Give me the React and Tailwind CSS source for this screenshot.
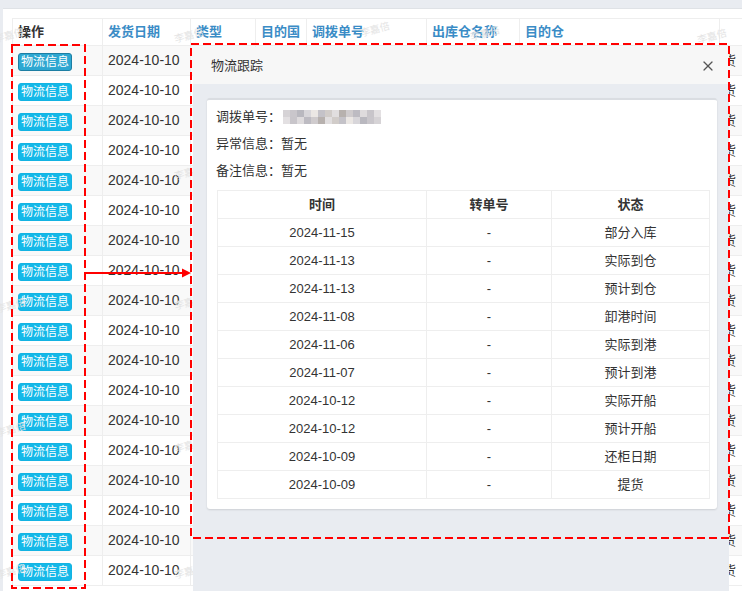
import { X } from "lucide-react";

const font = { fontFamily: "'Liberation Sans', 'Noto Sans CJK SC', sans-serif" };

const headers = [
  { label: "操作", w: "w-[90px]", dark: true },
  { label: "发货日期", w: "w-[88px]" },
  { label: "类型", w: "w-[65px]" },
  { label: "目的国", w: "w-[51px]" },
  { label: "调拨单号", w: "w-[120px]" },
  { label: "出库仓名称", w: "w-[93px]" },
  { label: "目的仓", w: "w-[200px]" },
  { label: "", w: "w-[120px]" },
];

const rows = Array.from({ length: 18 }, () => "2024-10-10");

const tracks = [
  ["2024-11-15", "部分入库"],
  ["2024-11-13", "实际到仓"],
  ["2024-11-13", "预计到仓"],
  ["2024-11-08", "卸港时间"],
  ["2024-11-06", "实际到港"],
  ["2024-11-07", "预计到港"],
  ["2024-10-12", "实际开船"],
  ["2024-10-12", "预计开船"],
  ["2024-10-09", "还柜日期"],
  ["2024-10-09", "提货"],
];

const mosaic = [
  "#d6d3d6", "#c9c6cb", "#b9b8bf", "#d8d6da", "#ebe7e4", "#c4c2c8", "#d1ccc9",
  "#e1dedf", "#b7b1ae", "#cfcbcd", "#bdbbc2", "#dedbdd", "#c8c5ca", "#e3e0e2",
];

// faint watermark spots
const marks = [
  [-6, 28], [174, 28], [360, 22], [470, 26], [697, 29],
  [174, 165], [-4, 298], [174, 295], [-4, 422], [174, 438], [-4, 564], [174, 564],
];

const App = () => {
  return (
    <div
      className="relative w-[742px] h-[591px] overflow-hidden bg-[#e9ecf1] text-[#333]"
      style={font}
    >
      {/* Main list */}
      <div className="pt-[8px] pl-[3px] h-full">
        <div className="bg-white h-full border-t border-[#dfe2e6] pt-[9px] pl-[9px]">
          <table className="table-fixed border-collapse w-[827px]">
            <thead>
              <tr className="h-[27px]">
                {headers.map((h, i) => (
                  <th
                    key={i}
                    className={`${h.w} border border-[#eeeeee] px-[5px] text-left text-[13px] font-bold ${
                      h.dark ? "text-[#333]" : "text-[#3a8cc6]"
                    }`}
                  >
                    {h.label}
                  </th>
                ))}
              </tr>
            </thead>
            <tbody>
              {rows.map((d, i) => (
                <tr key={i} className={`h-[30px] ${i % 2 === 0 ? "bg-[#f9f9f9]" : "bg-white"}`}>
                  <td className="border border-[#eeeeee] px-[5px]">
                    <button
                      className={`h-[18px] w-[54px] rounded-[3px] text-[12px] leading-none text-white ${
                        i === 0
                          ? "bg-[#2ea7d1] border border-[#1d7ea3]"
                          : "bg-[#14b8e8] border border-[#13b3e2]"
                      }`}
                    >
                      物流信息
                    </button>
                  </td>
                  <td className="border border-[#eeeeee] px-[5px] text-[14px]">{d}</td>
                  <td className="border border-[#eeeeee] px-[5px] text-[13px]">海运</td>
                  <td className="border border-[#eeeeee] px-[5px] text-[13px]">美国</td>
                  <td className="border border-[#eeeeee] px-[5px] text-[13px]">DB2024100</td>
                  <td className="border border-[#eeeeee] px-[5px] text-[13px]">深圳仓</td>
                  <td className="border border-[#eeeeee] px-[5px] text-[13px]">美西仓</td>
                  <td className="border border-[#eeeeee] pl-[3px] text-[13px]">货</td>
                </tr>
              ))}
            </tbody>
          </table>
        </div>
      </div>

      {/* Watermarks */}
      {marks.map(([x, y], i) => (
        <span
          key={i}
          className="absolute text-[10px] text-[#e4e4e4] -rotate-[15deg] select-none pointer-events-none"
          style={{ left: x, top: y }}
        >
          李嘉倍
        </span>
      ))}

      {/* Modal */}
      <div className="absolute left-[193px] top-[47px] w-[536px] bottom-0 flex flex-col">
        <div className="h-[37px] shrink-0 bg-[#f7f7f7] flex items-center justify-between pl-[18px] pr-[13px]">
          <span className="text-[13px] text-[#333]">物流跟踪</span>
          <X size={16} strokeWidth={1.8} className="text-[#555]" />
        </div>
        <div className="flex-1 bg-[#e9ecf1] pt-[14px] pl-[14px] pr-[12px]">
          <div className="bg-white rounded-[3px] border-t-2 border-[#dadde2] shadow-[0_1px_2px_rgba(0,0,0,0.12)] pt-[3px] pb-[10px] pl-[9px]">
            <div className="h-[27px] flex items-center text-[13px]">
              <span>调拨单号：</span>
              <div className="ml-[2px] flex flex-col">
                <div className="flex">
                  {mosaic.map((c, i) => (
                    <span key={i} className="w-[7px] h-[7px]" style={{ background: c }} />
                  ))}
                </div>
                <div className="flex">
                  {mosaic
                    .slice()
                    .reverse()
                    .map((c, i) => (
                      <span key={i} className="w-[7px] h-[7px]" style={{ background: c }} />
                    ))}
                </div>
              </div>
            </div>
            <div className="h-[27px] flex items-center text-[13px]">异常信息：暂无</div>
            <div className="h-[27px] flex items-center text-[13px]">备注信息：暂无</div>
            <table className="mt-[6px] ml-px table-fixed border-collapse w-[492px] text-[13px]">
              <thead>
                <tr className="h-[28px]">
                  <th className="w-[209px] border border-[#eeeeee] font-bold">时间</th>
                  <th className="w-[125px] border border-[#eeeeee] font-bold">转单号</th>
                  <th className="w-[158px] border border-[#eeeeee] font-bold">状态</th>
                </tr>
              </thead>
              <tbody>
                {tracks.map(([t, s], i) => (
                  <tr key={i} className="h-[28px]">
                    <td className="border border-[#eeeeee] text-center">{t}</td>
                    <td className="border border-[#eeeeee] text-center">-</td>
                    <td className="border border-[#eeeeee] text-center">{s}</td>
                  </tr>
                ))}
              </tbody>
            </table>
          </div>
        </div>
      </div>

      {/* Annotations */}
      <svg
        className="absolute inset-0 pointer-events-none"
        width="742"
        height="591"
        viewBox="0 0 742 591"
      >
        <rect x="12" y="45" width="73" height="543" fill="none" stroke="#ff0000" strokeWidth="2" strokeDasharray="8 4" />
        <rect x="191" y="44" width="538" height="494" fill="none" stroke="#ff0000" strokeWidth="2" strokeDasharray="8 4" />
        <line x1="86" y1="273" x2="183" y2="273" stroke="#ff0000" strokeWidth="2" />
        <polygon points="182,268.5 191,273 182,277.5" fill="#ff0000" />
      </svg>
    </div>
  );
};

export default App;
